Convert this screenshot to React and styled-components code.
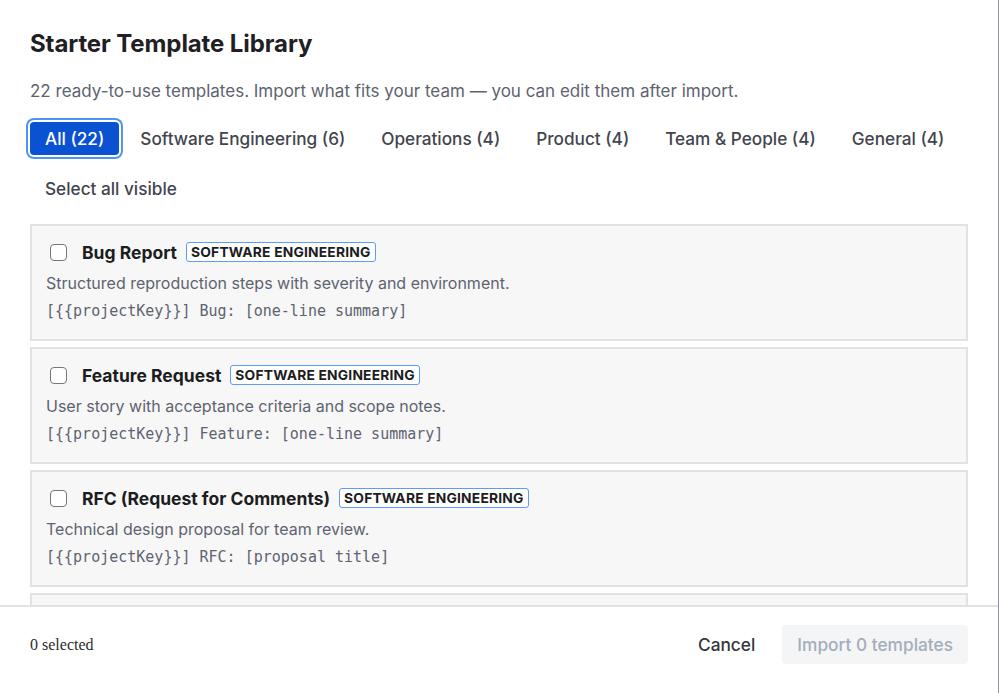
import React from 'react';
import styled, { createGlobalStyle } from 'styled-components';

const GlobalStyle = createGlobalStyle`
  html, body {
    margin: 0;
    padding: 0;
    background: #ffffff;
  }
  * {
    box-sizing: border-box;
  }
`;

const templates = [
  {
    id: 'bug',
    title: 'Bug Report',
    category: 'Software Engineering',
    description: 'Structured reproduction steps with severity and environment.',
    pattern: '[{{projectKey}}] Bug: [one-line summary]',
  },
  {
    id: 'feature',
    title: 'Feature Request',
    category: 'Software Engineering',
    description: 'User story with acceptance criteria and scope notes.',
    pattern: '[{{projectKey}}] Feature: [one-line summary]',
  },
  {
    id: 'rfc',
    title: 'RFC (Request for Comments)',
    category: 'Software Engineering',
    description: 'Technical design proposal for team review.',
    pattern: '[{{projectKey}}] RFC: [proposal title]',
  },
  {
    id: 'incident',
    title: 'Incident Postmortem',
    category: 'Operations',
    description: 'Timeline, impact, root cause and follow-up actions.',
    pattern: '[{{projectKey}}] Postmortem: [incident name]',
  },
];

const tabs = [
  { label: 'All (22)', active: true },
  { label: 'Software Engineering (6)' },
  { label: 'Operations (4)' },
  { label: 'Product (4)' },
  { label: 'Team & People (4)' },
  { label: 'General (4)' },
];

const Dialog = styled.div`
  height: 100vh;
  width: 999px;
  display: flex;
  flex-direction: column;
  border-right: 1px solid #8e96aa;
  font-family: Inter, "Open Sans", "Liberation Sans", sans-serif;
  color: #1f2024;
`;

const Body = styled.div`
  flex: 1;
  min-height: 0;
  overflow-y: auto;
  padding: 27px 30px 20px 30px;
  scrollbar-width: none;

  &::-webkit-scrollbar {
    display: none;
  }
`;

const Title = styled.h2`
  margin: 0;
  font-size: 24px;
  line-height: 34px;
  font-weight: 700;
  letter-spacing: -0.1px;
  color: #1f2024;
`;

const Subtitle = styled.p`
  margin: 18px 0 0;
  font-size: 17px;
  line-height: 24px;
  color: #5e6370;
`;

const TabList = styled.div`
  display: flex;
  align-items: center;
  gap: 6px;
  margin-top: 19px;
`;

const Tab = styled.button`
  flex-shrink: 0;
  white-space: nowrap;
  border: none;
  border-radius: 4px;
  padding: 0 15px;
  height: 33px;
  font-family: inherit;
  font-size: 17.2px;
  font-weight: 500;
  cursor: pointer;
  background: ${(p) => (p.$active ? '#0a52d1' : 'transparent')};
  color: ${(p) => (p.$active ? '#ffffff' : '#42454e')};
  box-shadow: ${(p) =>
    p.$active ? '0 0 0 2px #ffffff, 0 0 0 4px #4c95f7' : 'none'};
`;

const SelectAll = styled.button`
  display: block;
  margin-top: 17px;
  border: none;
  background: transparent;
  padding: 0 15px;
  height: 32px;
  font-family: inherit;
  font-size: 17.2px;
  font-weight: 500;
  color: #42454e;
  cursor: pointer;
`;

const List = styled.div`
  display: flex;
  flex-direction: column;
  gap: 6px;
  margin-top: 20px;
`;

const Card = styled.label`
  display: flex;
  flex-direction: column;
  flex-shrink: 0;
  background: #f7f7f7;
  border: 2px solid #e2e2e2;
  padding: 14px 14px 16px 14px;
  cursor: pointer;
`;

const CardHeader = styled.div`
  display: flex;
  align-items: center;
  gap: 9px;
  height: 24px;
`;

const Checkbox = styled.span`
  width: 17px;
  height: 17px;
  margin: 0 6px 0 4px;
  border: 1.5px solid #767676;
  border-radius: 4px;
  background: #ffffff;
  flex-shrink: 0;
`;

const CardTitle = styled.span`
  font-size: 17.5px;
  font-weight: 700;
  color: #1c1d21;
`;

const Badge = styled.span`
  border: 1px solid #5c9cf5;
  border-radius: 3px;
  background: #ffffff;
  padding: 0 4px;
  height: 20px;
  line-height: 18px;
  font-size: 13.8px;
  font-weight: 700;
  letter-spacing: 0.2px;
  text-transform: uppercase;
  color: #1c1d21;
`;

const Description = styled.p`
  margin: 7px 0 0;
  font-size: 16px;
  line-height: 24px;
  color: #5e6370;
`;

const Pattern = styled.code`
  margin-top: 4px;
  font-family: "DejaVu Sans Mono", "Liberation Mono", monospace;
  font-size: 15px;
  line-height: 24px;
  color: #5e6370;
`;

const Footer = styled.div`
  flex-shrink: 0;
  height: 88px;
  border-top: 2px solid #e2e2e2;
  display: flex;
  align-items: flex-start;
  justify-content: space-between;
  padding: 18px 30px 0;
`;

const SelectedCount = styled.span`
  font-family: "Liberation Serif", "DejaVu Serif", serif;
  font-size: 16px;
  line-height: 39px;
  color: #2b2b2b;
`;

const Actions = styled.div`
  display: flex;
  align-items: center;
  gap: 11px;
`;

const FooterButton = styled.button`
  height: 39px;
  border: none;
  border-radius: 4px;
  padding: 0 ${(p) => (p.$primary ? '15px' : '16px')};
  font-family: inherit;
  font-size: 17.3px;
  font-weight: 500;
  background: ${(p) => (p.$primary ? '#f4f5f7' : 'transparent')};
  color: ${(p) => (p.$primary ? '#a5adba' : '#34363c')};
  cursor: ${(p) => (p.disabled ? 'not-allowed' : 'pointer')};
`;

const App = () => {
  return (
    <>
      <GlobalStyle />
      <Dialog>
        <Body>
          <Title>Starter Template Library</Title>
          <Subtitle>
            22 ready-to-use templates. Import what fits your team — you can edit them after import.
          </Subtitle>
          <TabList>
            {tabs.map((tab) => (
              <Tab key={tab.label} $active={tab.active}>
                {tab.label}
              </Tab>
            ))}
          </TabList>
          <SelectAll>Select all visible</SelectAll>
          <List>
            {templates.map((t) => (
              <Card key={t.id}>
                <CardHeader>
                  <Checkbox />
                  <CardTitle>{t.title}</CardTitle>
                  <Badge>{t.category}</Badge>
                </CardHeader>
                <Description>{t.description}</Description>
                <Pattern>{t.pattern}</Pattern>
              </Card>
            ))}
          </List>
        </Body>
        <Footer>
          <SelectedCount>0 selected</SelectedCount>
          <Actions>
            <FooterButton>Cancel</FooterButton>
            <FooterButton $primary disabled>
              Import 0 templates
            </FooterButton>
          </Actions>
        </Footer>
      </Dialog>
    </>
  );
};

export default App;
